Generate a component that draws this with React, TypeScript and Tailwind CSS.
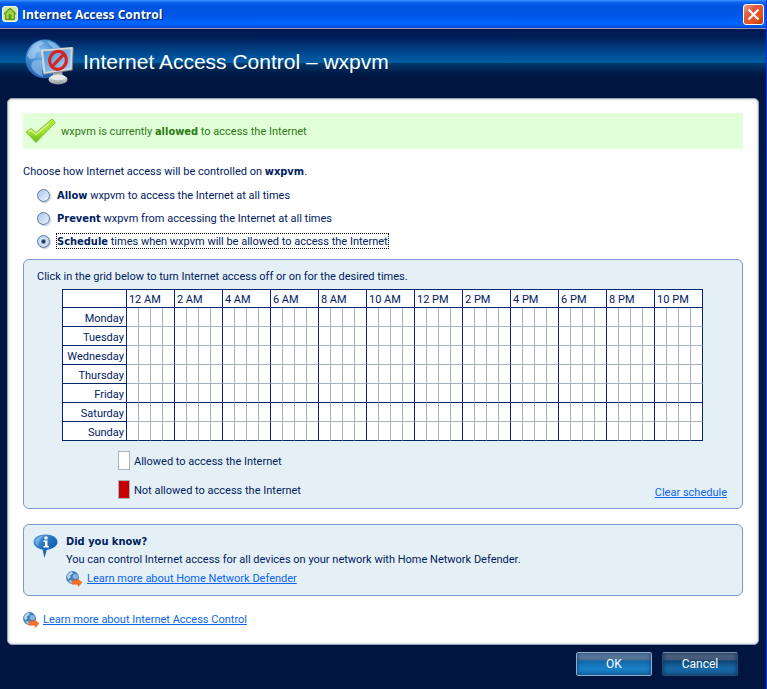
import { useState } from "react"

type AccessMode = "allow" | "prevent" | "schedule"

const days = ["Monday", "Tuesday", "Wednesday", "Thursday", "Friday", "Saturday", "Sunday"]
const hourLabels = [
  "12 AM", "2 AM", "4 AM", "6 AM", "8 AM", "10 AM",
  "12 PM", "2 PM", "4 PM", "6 PM", "8 PM", "10 PM",
]
const slots = Array.from({ length: 48 }, (_, i) => i)

const modes: { value: AccessMode; strong: string; rest: string }[] = [
  { value: "allow", strong: "Allow", rest: "wxpvm to access the Internet at all times" },
  { value: "prevent", strong: "Prevent", rest: "wxpvm from accessing the Internet at all times" },
  { value: "schedule", strong: "Schedule", rest: "times when wxpvm will be allowed to access the Internet" },
]

function Strong({ children }: { children: string }) {
  return <b className="font-['DejaVu_Sans_Condensed','DejaVu_Sans',sans-serif]">{children}</b>
}

function HouseIcon() {
  return (
    <svg width="16" height="16" viewBox="0 0 16 16" aria-hidden="true">
      <rect x="0.5" y="0.5" width="15" height="15" rx="2.5" fill="#cfe8a6" stroke="#f3fbe4" />
      <path d="M8 2 L14 7.6 L12.4 8.6 V13.5 H3.6 V8.6 L2 7.6 Z" fill="#79b82a" stroke="#4f8a17" strokeWidth="0.9" strokeLinejoin="round" />
      <path d="M8 3.8 L11.6 7.4 V12.6 H4.4 V7.4 Z" fill="#a5d64f" />
      <rect x="6.6" y="8.4" width="2.8" height="5" fill="#5a961c" />
    </svg>
  )
}

function BlockedGlobeIcon() {
  return (
    <svg width="50" height="46" viewBox="0 0 50 46" aria-hidden="true">
      <defs>
        <radialGradient id="globe" cx="0.4" cy="0.3" r="0.75">
          <stop offset="0" stopColor="#8cc0ee" />
          <stop offset="0.5" stopColor="#3e86cf" />
          <stop offset="1" stopColor="#1c56a5" />
        </radialGradient>
        <linearGradient id="screen" x1="0" y1="0" x2="1" y2="1">
          <stop offset="0" stopColor="#3f8fd6" />
          <stop offset="1" stopColor="#b4daf6" />
        </linearGradient>
        <linearGradient id="metal" x1="0" y1="0" x2="0" y2="1">
          <stop offset="0" stopColor="#f5f5f5" />
          <stop offset="1" stopColor="#8f959b" />
        </linearGradient>
      </defs>
      <circle cx="20" cy="20" r="19.5" fill="url(#globe)" />
      <path d="M4 12 Q8 4 15 2 L19 4 L14 8 L16 11 L11 14 L10 19 L5 20 L2 17 Z" fill="#b9dcf7" opacity="0.55" />
      <path d="M22 2 Q30 3 35 9 L28 9 L25 6 Z" fill="#b9dcf7" opacity="0.55" />
      <path d="M8 22 L16 21 L19 26 L17 33 L18 38 Q9 35 6 27 Z" fill="#a3cff2" opacity="0.55" />
      <path d="M28 32 L37 31 L38 38 H28 Z" fill="#9aa0a6" />
      <ellipse cx="33" cy="40.5" rx="9.5" ry="5" fill="url(#metal)" />
      <ellipse cx="33" cy="38.5" rx="7.5" ry="2.8" fill="#e4e6e8" />
      <path d="M17 11.5 L47 9 L46 30 L19.5 34 Z" fill="url(#screen)" stroke="#d3d6d9" strokeWidth="2.2" strokeLinejoin="round" />
      <path d="M48.2 8.5 L47.2 31 L19 35.3" fill="none" stroke="#83898f" strokeWidth="0.9" />
      <g fill="none" stroke="#d62222" strokeWidth="3.2">
        <ellipse cx="33" cy="21.3" rx="8.4" ry="9" transform="rotate(12 33 21.3)" />
        <path d="M27.3 27.5 L38.8 15.2" />
      </g>
    </svg>
  )
}

function CheckIcon() {
  return (
    <svg width="32" height="26" viewBox="0 0 32 26" aria-hidden="true">
      <defs>
        <linearGradient id="tick" x1="0" y1="0" x2="0" y2="1">
          <stop offset="0" stopColor="#b4ec3c" />
          <stop offset="0.6" stopColor="#9be02a" />
          <stop offset="1" stopColor="#62bb12" />
        </linearGradient>
      </defs>
      <path d="M1 14 L6 10.5 L11 14.5 L27 1 L30.5 4.5 L11 24.5 Z" fill="url(#tick)" stroke="#7fb43c" strokeWidth="0.8" strokeLinejoin="round" />
      <path d="M3.5 14 L6 12.2 L11 16.5 L24 5.5" fill="none" stroke="#d8f795" strokeWidth="1.4" />
    </svg>
  )
}

function InfoIcon() {
  return (
    <svg width="25" height="25" viewBox="0 0 25 25" aria-hidden="true">
      <defs>
        <linearGradient id="balloon" x1="0" y1="0" x2="1" y2="1">
          <stop offset="0" stopColor="#5ea4dc" />
          <stop offset="0.5" stopColor="#1f6fbd" />
          <stop offset="1" stopColor="#0a4c9e" />
        </linearGradient>
      </defs>
      <path d="M12.5 0.5 C19.5 0.5 24.5 3.5 24.5 8 C24.5 12 20 15 13.8 15.8 L11.5 24 L9.5 15.6 C4.3 14.7 0.5 11.8 0.5 8 C0.5 3.5 5.5 0.5 12.5 0.5 Z" fill="url(#balloon)" />
      <path d="M3 5 Q6 1.5 12 1.5 Q6 4 5 12 Q1 9 3 5 Z" fill="#8fc4ec" opacity="0.6" />
      <circle cx="13" cy="4" r="1.7" fill="#fff" />
      <path d="M10.5 6.5 H14.5 V12 H16 V13.5 H10.5 V12 H12 V8 H10.5 Z" fill="#fff" />
    </svg>
  )
}

function WebLinkIcon() {
  return (
    <svg className="shrink-0" width="16" height="16" viewBox="0 0 16 16" aria-hidden="true">
      <circle cx="6.5" cy="6.5" r="6.4" fill="#3f7fb8" />
      <path d="M1 5 Q2 1.5 6 0.8 L7 2.5 L4 4.5 L4.5 6.5 L2 8.5 Z" fill="#b4d6ef" />
      <path d="M7.5 3 L11.5 3.5 L12 7 L9 8.5 L6.5 6.5 Z" fill="#84b5dd" />
      <path d="M2.5 9.5 L6 9 L7 12.5 Q4 12.5 2.5 9.5 Z" fill="#9cc6e6" />
      <path d="M6 9.2 H11 V7.6 L16 11.4 L12.3 15.5 L12 13.2 H6 Z" fill="#f8702a" stroke="#dd5412" strokeWidth="0.5" />
    </svg>
  )
}

function TitleBar() {
  return (
    <div className="flex h-[29px] items-center gap-1 border-b border-[#8a97b0] bg-[linear-gradient(to_bottom,#3a93ff_0%,#0a5fee_10%,#0053e0_25%,#0058ea_60%,#0066ff_85%,#0048d8_100%)] pr-[2px] pl-[2px]">
      <HouseIcon />
      <span className="flex-1 pt-[2px] font-['Open_Sans',sans-serif] text-[12px] font-bold text-white [text-shadow:1px_1px_1px_#00246b]">
        Internet Access Control
      </span>
      <button
        aria-label="Close"
        className="flex size-[21px] items-center justify-center rounded-[3px] border border-white bg-[linear-gradient(135deg,#f0a28a_0%,#e0593a_35%,#e4531f_70%,#b93410_100%)]"
      >
        <svg width="13" height="13" viewBox="0 0 13 13" aria-hidden="true">
          <path d="M1.5 1.5 L11.5 11.5 M11.5 1.5 L1.5 11.5" stroke="#fff" strokeWidth="2.1" />
        </svg>
      </button>
    </div>
  )
}

interface ScheduleGridProps {
  blocked: Set<string>
  onToggle: (key: string) => void
}

function ScheduleGrid({ blocked, onToggle }: ScheduleGridProps) {
  return (
    <table className="mx-auto w-[641px] table-fixed border-separate border-spacing-0 border-t border-l border-[#002869] bg-white">
      <colgroup>
        <col className="w-16" />
        {slots.map((slot) => (
          <col key={slot} className="w-3" />
        ))}
      </colgroup>
      <thead>
        <tr className="h-[18px]">
          <td className="border-r border-b border-[#002869] p-0" />
          {hourLabels.map((label) => (
            <th key={label} colSpan={4} scope="col" className="border-r border-b border-[#002869] p-0 pt-[2px] pl-[2px] text-left leading-[15px] font-normal whitespace-nowrap">
              {label}
            </th>
          ))}
        </tr>
      </thead>
      <tbody>
        {days.map((day) => {
          // weekday block ends at Friday
          const heavy = day === "Friday" || day === "Sunday"
          return (
            <tr key={day} className="h-[19px]">
              <th scope="row" className="border-r border-b border-[#002869] p-0 pt-[3px] pr-[2px] text-right leading-[15px] font-normal">
                {day}
              </th>
              {slots.map((slot) => {
                const key = `${day}-${slot}`
                return (
                  <td
                    key={slot}
                    className={`border-r border-b p-0 ${slot % 4 === 3 ? "border-r-[#002869]" : "border-r-[#a7b2bd]"} ${heavy ? "border-b-[#002869]" : "border-b-[#a7b2bd]"}`}
                  >
                    <button
                      aria-label={`${day}, half hour ${slot + 1}`}
                      aria-pressed={blocked.has(key)}
                      onClick={() => onToggle(key)}
                      className={`block h-[18px] w-full ${blocked.has(key) ? "bg-[#c80000]" : "bg-white"}`}
                    />
                  </td>
                )
              })}
            </tr>
          )
        })}
      </tbody>
    </table>
  )
}

export default function App() {
  const [mode, setMode] = useState<AccessMode>("schedule")
  const [blocked, setBlocked] = useState<Set<string>>(new Set())

  const toggleSlot = (key: string) => {
    setBlocked((prev) => {
      const next = new Set(prev)
      if (next.has(key)) next.delete(key)
      else next.add(key)
      return next
    })
  }

  return (
    <div className="flex min-h-screen flex-col border-r border-[#0033dd] bg-[#001540] font-['Roboto',sans-serif] text-[11px] leading-4 text-[#00205f]">
      <TitleBar />

      <header className="flex h-[69px] items-center gap-2 bg-[linear-gradient(to_bottom,#001852_0%,#001e58_12%,#00529a_40%,#005c9f_49%,#003a6c_50%,#001c48_63%,#001540_73%)] pb-[3px] pl-[25px]">
        <BlockedGlobeIcon />
        <h1 className="font-['Liberation_Sans',Arial,sans-serif] text-[21px] leading-6 text-white">
          Internet Access Control – wxpvm
        </h1>
      </header>

      <main className="mx-[7px] rounded-[5px] border border-[#9aa5b4] bg-white px-[15px] pt-[14px] pb-4 shadow-[inset_0_0_3px_#b8c0c8]">
        <div className="flex h-9 items-center gap-1 bg-[#e1ffd8] pl-[2px] text-[#2a7a14]">
          <CheckIcon />
          <p className="pt-[2px]">
            wxpvm is currently <Strong>allowed</Strong> to access the Internet
          </p>
        </div>

        <fieldset className="mt-[15px]">
          <legend>
            Choose how Internet access will be controlled on <Strong>wxpvm</Strong>.
          </legend>
          <div className="mt-[7px] flex flex-col items-start gap-[7px] pl-[14px]">
            {modes.map((m) => (
              <label key={m.value} className="flex items-center gap-[6px]">
                <input
                  type="radio"
                  name="access-mode"
                  checked={mode === m.value}
                  onChange={() => setMode(m.value)}
                  className="size-[13px] appearance-none rounded-full border border-[#5a78a4] bg-[linear-gradient(135deg,#a9c6e8,#eaf4ff)] shadow-[1px_1px_1px_#c4ccd4] checked:bg-[radial-gradient(circle,#16305c_0px,#16305c_1px,#d3e5f8_3px,#b4cdea_6px)]"
                />
                <span
                  className={`border border-dotted pt-px leading-[13px] ${mode === m.value ? "border-black" : "border-transparent"}`}
                >
                  <Strong>{m.strong}</Strong> {m.rest}
                </span>
              </label>
            ))}
          </div>
        </fieldset>

        <section className="mt-[10px] rounded-[6px] border border-[#7c9acb] bg-[#e5f0f6] pt-[9px] pr-px pb-[9px]">
          <p className="mb-1 pl-[13px]">Click in the grid below to turn Internet access off or on for the desired times.</p>
          <ScheduleGrid blocked={blocked} onToggle={toggleSlot} />
          <div className="mt-[10px] flex items-end justify-between pr-[14px] pl-[94px]">
            <ul className="flex flex-col gap-[10px]">
              <li className="flex items-center gap-1">
                <span className="h-[19px] w-3 border border-[#a7b2bd] bg-white" />
                <span className="pt-[2px]">Allowed to access the Internet</span>
              </li>
              <li className="flex items-center gap-1">
                <span className="h-[19px] w-3 border border-[#a7b2bd] bg-[#c80000]" />
                <span className="pt-[2px]">Not allowed to access the Internet</span>
              </li>
            </ul>
            <a
              href="#clear"
              onClick={(e) => {
                e.preventDefault()
                setBlocked(new Set())
              }}
              className="leading-[13px] text-[#0a66ee] underline"
            >
              Clear schedule
            </a>
          </div>
        </section>

        <section className="mt-[15px] flex gap-2 rounded-[6px] border border-[#7c9acb] bg-[#e5f0f6] px-[9px] pt-[9px] pb-2">
          <InfoIcon />
          <div>
            <h2>
              <Strong>Did you know?</Strong>
            </h2>
            <p className="mt-[2px]">You can control Internet access for all devices on your network with Home Network Defender.</p>
            <div className="mt-[3px] flex items-center gap-[5px]">
              <WebLinkIcon />
              <a href="#defender" className="text-[#0a66ee] underline">
                Learn more about Home Network Defender
              </a>
            </div>
          </div>
        </section>

        <div className="mt-4 flex items-center gap-1">
          <WebLinkIcon />
          <a href="#access-control" className="text-[#0a66ee] underline">
            Learn more about Internet Access Control
          </a>
        </div>
      </main>

      <footer className="flex justify-end gap-[10px] pt-[7px] pr-7 pb-3 text-[12px] text-white">
        <button className="h-6 w-[76px] rounded-[2px] border border-[#8fa9c0] bg-[linear-gradient(to_bottom,#66809f_0%,#4d7092_30%,#1368a8_36%,#1a7fc6_70%,#1672b5_100%)] shadow-[inset_0_0_4px_#0a4478]">
          OK
        </button>
        <button className="h-6 w-[76px] rounded-[2px] border border-[#2a4a70] border-t-[#7888a0] bg-[linear-gradient(to_bottom,#56677f_0%,#42597a_30%,#0d4679_36%,#1668a4_70%,#14609a_100%)] shadow-[inset_0_0_4px_#07305a]">
          Cancel
        </button>
      </footer>
    </div>
  )
}
